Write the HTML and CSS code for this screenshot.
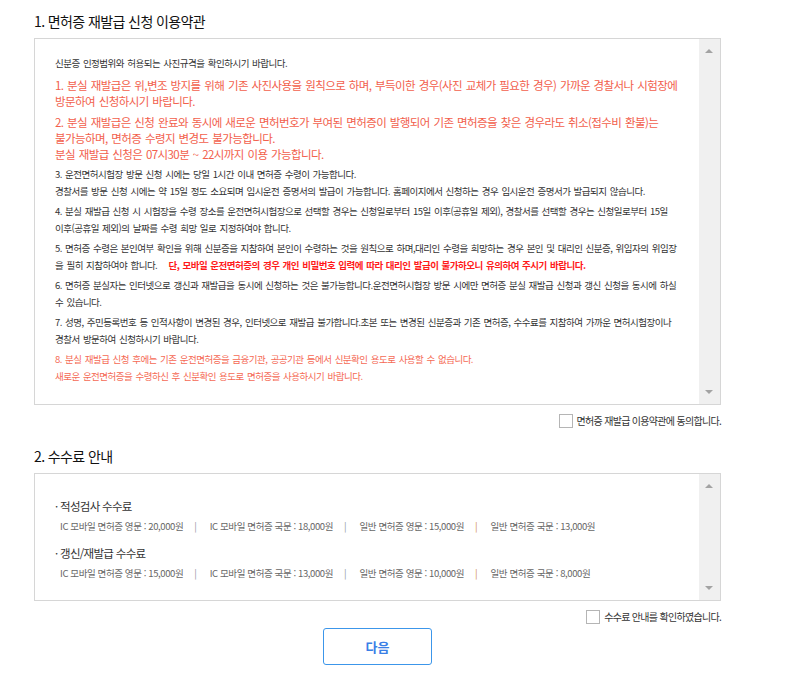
FILE: index.html
```html
<!DOCTYPE html>
<html lang="ko">
<head>
  <meta charset="UTF-8">
  <meta name="viewport" content="width=device-width, initial-scale=1.0">
  <title>면허증 재발급 신청</title>
  <link rel="stylesheet" href="styles.css">
</head>
<body>
  <div class="container">
    <h2 class="sec-title">1. 면허증 재발급 신청 이용약관</h2>
    <div class="scroll-box terms-box">
      <div class="scroll-body">
        <p class="note first">신분증 인정범위와 허용되는 사진규격을 확인하시기 바랍니다.</p>
        <p class="warn">1. 분실 재발급은 위,변조 방지를 위해 기존 사진사용을 원칙으로 하며, 부득이한 경우(사진 교체가 필요한 경우) 가까운 경찰서나 시험장에<br>방문하여 신청하시기 바랍니다.</p>
        <p class="warn">2. 분실 재발급은 신청 완료와 동시에 새로운 면허번호가 부여된 면허증이 발행되어 기존 면허증을 찾은 경우라도 취소(접수비 환불)는<br>불가능하며, 면허증 수령지 변경도 불가능합니다.<br>분실 재발급 신청은 07시30분 ~ 22시까지 이용 가능합니다.</p>
        <p class="note">3. 운전면허시험장 방문 신청 시에는 당일 1시간 이내 면허증 수령이 가능합니다.<br>경찰서를 방문 신청 시에는 약 15일 정도 소요되며 임시운전 증명서의 발급이 가능합니다. 홈페이지에서 신청하는 경우 임시운전 증명서가 발급되지 않습니다.</p>
        <p class="note">4. 분실 재발급 신청 시 시험장을 수령 장소를 운전면허시험장으로 선택할 경우는 신청일로부터 15일 이후(공휴일 제외), 경찰서를 선택할 경우는 신청일로부터 15일<br>이후(공휴일 제외)의 날짜를 수령 희망 일로 지정하여야 합니다.</p>
        <p class="note">5. 면허증 수령은 본인여부 확인을 위해 신분증을 지참하여 본인이 수령하는 것을 원칙으로 하며,대리인 수령을 희망하는 경우 본인 및 대리인 신분증, 위임자의 위임장<br>을 필히 지참하여야 합니다. <strong class="alert">단, 모바일 운전면허증의 경우 개인 비밀번호 입력에 따라 대리인 발급이 불가하오니 유의하여 주시기 바랍니다.</strong></p>
        <p class="note">6. 면허증 분실자는 인터넷으로 갱신과 재발급을 동시에 신청하는 것은 불가능합니다.운전면허시험장 방문 시에만 면허증 분실 재발급 신청과 갱신 신청을 동시에 하실<br>수 있습니다.</p>
        <p class="note">7. 성명, 주민등록번호 등 인적사항이 변경된 경우, 인터넷으로 재발급 불가합니다.초본 또는 변경된 신분증과 기존 면허증, 수수료를 지참하여 가까운 면허시험장이나<br>경찰서 방문하여 신청하시기 바랍니다.</p>
        <p class="note soft-red">8. 분실 재발급 신청 후에는 기존 운전면허증을 금융기관, 공공기관 등에서 신분확인 용도로 사용할 수 없습니다.<br>새로운 운전면허증을 수령하신 후 신분확인 용도로 면허증을 사용하시기 바랍니다.</p>
      </div>
      <div class="scrollbar">
        <span class="arrow up"></span>
        <span class="arrow down"></span>
      </div>
    </div>
    <label class="agree"><span class="check"></span>면허증 재발급 이용약관에 동의합니다.</label>

    <h2 class="sec-title second">2. 수수료 안내</h2>
    <div class="scroll-box fee-box">
      <div class="scroll-body">
        <h3 class="fee-title">· 적성검사 수수료</h3>
        <p class="fee-row">
          <span>IC 모바일 면허증 영문 : 20,000원</span><i class="sep">|</i>
          <span>IC 모바일 면허증 국문 : 18,000원</span><i class="sep">|</i>
          <span>일반 면허증 영문 : 15,000원</span><i class="sep orange">|</i>
          <span>일반 면허증 국문 : 13,000원</span>
        </p>
        <h3 class="fee-title">· 갱신/재발급 수수료</h3>
        <p class="fee-row">
          <span>IC 모바일 면허증 영문 : 15,000원</span><i class="sep">|</i>
          <span>IC 모바일 면허증 국문 : 13,000원</span><i class="sep">|</i>
          <span>일반 면허증 영문 : 10,000원</span><i class="sep orange">|</i>
          <span>일반 면허증 국문 : 8,000원</span>
        </p>
      </div>
      <div class="scrollbar">
        <span class="arrow up"></span>
        <span class="arrow down"></span>
      </div>
    </div>
    <label class="agree"><span class="check"></span>수수료 안내를 확인하였습니다.</label>

    <div class="btn-area">
      <button type="button" class="next-btn">다음</button>
    </div>
  </div>
</body>
</html>
```

FILE: styles.css
```css
body {
  font-family: "Noto Sans CJK KR", "Noto Sans", sans-serif;
  background-color: #fff;
  color: #333;
  margin: 0;
  padding: 0;
}
.container {
  width: 687px;
  margin-left: 34px;
  padding-top: 11px;
}
.sec-title {
  margin: 0;
  font-size: 14px;
  font-weight: 400;
  letter-spacing: -0.6px;
  line-height: 20px;
  color: #111;
}
.sec-title.second {
  margin-top: 18px;
}
.scroll-box {
  display: flex;
  margin-top: 7px;
  border: 1px solid #d6d6d6;
  box-sizing: border-box;
}
.terms-box {
  height: 367px;
}
.fee-box {
  height: 128px;
  margin-top: 7px;
}
.scroll-body {
  flex: 1;
  overflow: hidden;
  padding: 0 10px 0 20px;
  white-space: nowrap;
}
.scrollbar {
  position: relative;
  width: 21px;
  background-color: #f0f0f0;
}
.arrow {
  position: absolute;
  left: 6px;
  width: 0;
  height: 0;
  border-left: 4px solid transparent;
  border-right: 4px solid transparent;
}
.arrow.up {
  top: 10px;
  border-bottom: 4px solid #a3a3a3;
}
.arrow.down {
  bottom: 10px;
  border-top: 4px solid #a3a3a3;
}
.note {
  margin: 3px 0 0;
  font-size: 9.5px;
  letter-spacing: -0.5px;
  word-spacing: 1px;
  line-height: 17px;
  color: #333;
}
.note.first {
  margin-top: 16px;
}
.warn {
  margin: 5px 0 0;
  font-size: 11.5px;
  letter-spacing: -0.58px;
  word-spacing: 1px;
  line-height: 16px;
  color: #f2604c;
}
.warn + .note {
  margin-top: 4px;
}
.alert {
  margin-left: 8px;
  color: #ff1a1a;
  font-weight: 700;
}
.soft-red {
  color: #f56a55;
}
.agree {
  display: flex;
  align-items: center;
  justify-content: flex-end;
  margin-top: 8px;
  font-size: 10px;
  letter-spacing: -0.7px;
  line-height: 15px;
  color: #333;
}
.check {
  width: 12px;
  height: 12px;
  border: 1px solid #b5b5b5;
  margin-right: 4px;
  background: #fff;
}
.fee-title {
  margin: 24px 0 0;
  font-size: 11.5px;
  font-weight: 400;
  letter-spacing: -0.7px;
  line-height: 16px;
  color: #333;
}
.fee-title + .fee-row + .fee-title {
  margin-top: 11px;
}
.fee-row {
  margin: 5px 0 0 5px;
  font-size: 9.5px;
  letter-spacing: -0.4px;
  line-height: 15px;
  color: #666;
}
.sep {
  font-style: normal;
  margin: 0 11px;
  color: #8e96a0;
}
.sep.orange {
  color: #d08a50;
}
.btn-area {
  display: flex;
  justify-content: center;
  margin-top: 4px;
}
.next-btn {
  width: 109px;
  height: 37px;
  background: #fff;
  border: 1px solid #3c96ea;
  border-radius: 3px;
  color: #3a7fe6;
  font-family: inherit;
  font-size: 13px;
  font-weight: 700;
  cursor: pointer;
}
```
